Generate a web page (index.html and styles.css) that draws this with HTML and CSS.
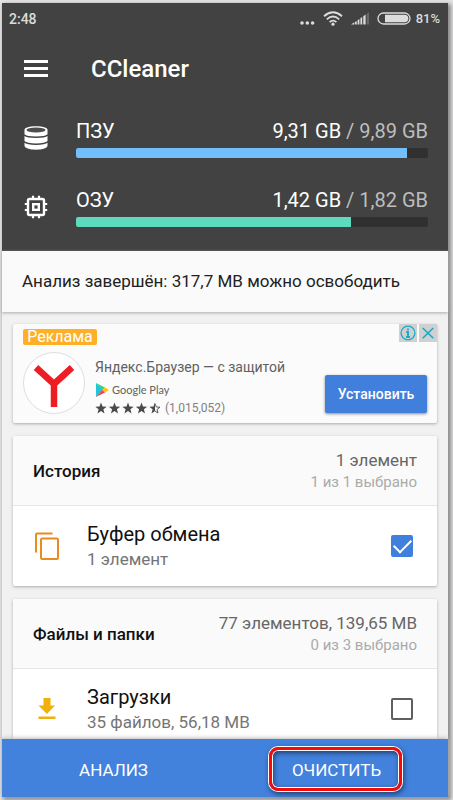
FILE: index.html
```html
<!DOCTYPE html>
<html lang="ru">
<head>
<meta charset="utf-8">
<meta name="viewport" content="width=device-width, initial-scale=1">
<title>CCleaner</title>
<link rel="stylesheet" href="styles.css">
</head>
<body>
<div class="phone">
  <header class="top">
    <div class="status">
      <span class="status-text">2:48</span>
      <div class="status-icons">
        <svg class="dots" viewBox="0 0 15 4" width="15" height="4" fill="currentColor"><circle cx="2" cy="2" r="1.8"/><circle cx="7.3" cy="2" r="1.8"/><circle cx="12.6" cy="2" r="1.8"/></svg>
        <svg class="wifi" viewBox="0 0 20 15" width="20" height="15" fill="none" stroke="currentColor" stroke-width="1.8"><path d="M1 5.2Q10 -2.6 19 5.2M3.8 8.3Q10 2.8 16.2 8.3M6.6 11.2Q10 8 13.4 11.2"/><circle cx="10" cy="13.2" r="1.6" fill="currentColor" stroke="none"/></svg>
        <svg class="signal" viewBox="0 0 18 13" width="18" height="13" fill="currentColor"><path d="M0 12.5L3 10.6V12.5ZM3.7 10.2L5.7 9V12.5H3.7ZM6.6 8.2L8.4 7V12.5H6.6ZM9.4 6.2L11.2 5V12.5H9.4ZM12.3 4.3L14.6 2.6V12.5H12.3Z"/><path opacity=".25" d="M15.6 2L18 .3V12.5H15.6Z"/></svg>
        <svg class="battery" viewBox="0 0 34 13" width="34" height="13"><rect x="1" y="1" width="32" height="11" rx="5.5" fill="none" stroke="currentColor" stroke-width="1.3"/><path d="M8 2.8H27.6A3.7 3.7 0 0 1 27.6 10.2H8Z" fill="currentColor"/></svg>
        <span class="percent">81%</span>
      </div>
    </div>
    <div class="appbar">
      <button class="menu" type="button" aria-label="Меню"><svg viewBox="0 0 24 18" width="24" height="18" fill="currentColor"><path d="M0 0H24V3H0ZM0 7H24V10H0ZM0 14H24V17H0Z"/></svg></button>
      <h1>CCleaner</h1>
    </div>
    <div class="meter">
      <svg class="meter-icon" viewBox="0 0 24 24" width="24" height="24"><path fill="currentColor" d="M.5 3.8C.5 1.8 5.5.3 12 .3s11.500 1.500 11.500 3.500V19.500C23.500 22 18.500 23.700 12 23.700S.5 22 .5 19.500Z"/><ellipse cx="12" cy="4" rx="9.500" ry="2.400" fill="#4d4d4d"/><path d="M0 8.700C3 12 21 12 24 8.700M0 15.500C3 19 21 19 24 15.500" fill="none" stroke="#424242" stroke-width="1.500"/></svg>
      <div class="meter-main">
        <div class="meter-label"><span>ПЗУ</span><span>9,31 GB <span class="total">/ 9,89 GB</span></span></div>
        <div class="track" role="progressbar" aria-label="ПЗУ" aria-valuenow="94"><div class="fill rom" style="width:94%"></div></div>
      </div>
    </div>
    <div class="meter">
      <svg class="meter-icon" viewBox="0 0 24 24" width="24" height="24" fill="none" stroke="currentColor"><rect x="4" y="4" width="16" height="16" rx="1.500" stroke-width="2.400"/><rect x="9.200" y="9.200" width="5.600" height="5.600" stroke-width="2.400"/><path stroke-width="2.200" d="M9 .8V4M15 .8V4M9 20V23.200M15 20V23.200M.8 9H4M.8 15H4M20 9H23.200M20 15H23.200"/></svg>
      <div class="meter-main">
        <div class="meter-label"><span>ОЗУ</span><span>1,42 GB <span class="total">/ 1,82 GB</span></span></div>
        <div class="track" role="progressbar" aria-label="ОЗУ" aria-valuenow="78"><div class="fill ram" style="width:78%"></div></div>
      </div>
    </div>
  </header>
  <p class="summary">Анализ завершён: 317,7 MB можно освободить</p>
  <main class="list">
    <section class="card ad">
      <div class="ad-controls">
        <button type="button" aria-label="О рекламе"><svg viewBox="0 0 18 18" width="18" height="18" fill="none" stroke="currentColor"><circle cx="9" cy="9" r="6.900" stroke-width="1.300"/><path stroke-width="1.900" d="M9 4.500V6.200M7.200 8H9V13M7 13H11"/></svg></button>
        <button type="button" aria-label="Закрыть"><svg viewBox="0 0 18 18" width="18" height="18" fill="none" stroke="currentColor" stroke-width="1.600"><path d="M3.700 4L14.300 14.300M14.300 4L3.700 14.300"/></svg></button>
      </div>
      <span class="ad-tag">Реклама</span>
      <div class="ad-body">
        <svg class="ad-logo" viewBox="0 0 62 62" width="62" height="62"><circle cx="31" cy="31" r="30.500" fill="#fff" stroke="#dedede"/><path d="M13 15.500L31 32L49 15.500M31 31V55" fill="none" stroke="#ee1c23" stroke-width="6.500"/></svg>
        <div class="ad-info">
          <div class="ad-title">Яндекс.Браузер — с защитой</div>
          <div class="store">
            <svg viewBox="0 0 14 14" width="14" height="14"><path fill="#22c4d9" d="M1 0L8 7L1 14Z"/><path fill="#35d07f" d="M1 0L10 4.500L7.500 7Z"/><path fill="#ef4056" d="M1 14L10 9.500L7.500 7Z"/><path fill="#ffc400" d="M10 4.500L14 7L10 9.500L7.500 7Z"/></svg>
            <span>Google Play</span>
          </div>
          <div class="rating">
            <svg viewBox="0 0 66 12" width="66" height="12" fill="#4a4a4a"><defs><path id="star" d="M6 .5L7.500 4.500L11.700 4.700L8.400 7.300L9.500 11.500L6 9.100L2.500 11.500L3.600 7.300L.3 4.700L4.500 4.500Z"/></defs><use href="#star"/><use href="#star" x="13.500"/><use href="#star" x="27"/><use href="#star" x="40.500"/><path d="M60 .5V9.100L56.500 11.500L57.600 7.300L54.300 4.700L58.500 4.500Z"/><path d="M60 1.500L61.300 5L65 5.200L62 7.500L63 11L60 9" fill="none" stroke="#4a4a4a" stroke-width=".9"/></svg>
            <span>(1,015,052)</span>
          </div>
        </div>
        <button class="install" type="button">Установить</button>
      </div>
    </section>
    <section class="card">
      <div class="card-head">
        <h2>История</h2>
        <div class="counts"><div class="count">1 элемент</div><div class="selected">1 из 1 выбрано</div></div>
      </div>
      <label class="item">
        <svg class="item-icon" viewBox="0 0 28 28" width="28" height="28" fill="none" stroke="#e98a23" stroke-width="2"><path d="M3 20.500V2.500Q3 1.500 4 1.500H19.500"/><rect x="8" y="6.500" width="17" height="20.500" rx="1.200"/></svg>
        <span class="item-text"><span class="name">Буфер обмена</span><span class="detail">1 элемент</span></span>
        <input type="checkbox" checked>
      </label>
    </section>
    <section class="card">
      <div class="card-head">
        <h2>Файлы и папки</h2>
        <div class="counts"><div class="count">77 элементов, 139,65 MB</div><div class="selected">0 из 3 выбрано</div></div>
      </div>
      <label class="item">
        <svg class="item-icon" viewBox="0 0 28 28" width="28" height="28" fill="#f2b10a"><path d="M10.500 3H17.500V10.500H22L14 19L5.500 10.500H10.500ZM5.500 21.500H22.500V24H5.500Z"/></svg>
        <span class="item-text"><span class="name">Загрузки</span><span class="detail">35 файлов, 56,18 MB</span></span>
        <input type="checkbox">
      </label>
    </section>
  </main>
  <footer class="actions">
    <button type="button">АНАЛИЗ</button>
    <button type="button" class="marked">ОЧИСТИТЬ</button>
  </footer>
</div>
</body>
</html>
```
FILE: styles.css
```css
* { box-sizing: border-box; }
body {
  margin: 0;
  height: 100vh;
  padding: 3px 5px 3px 2px;
  background: #e4e4e4;
  font-family: Roboto, "Liberation Sans", sans-serif;
}
h1, h2, p { margin: 0; }
button {
  margin: 0;
  padding: 0;
  border: 0;
  background: none;
  color: inherit;
  font: inherit;
  cursor: pointer;
}
svg { display: block; flex: none; }
.phone {
  display: flex;
  flex-direction: column;
  height: 100%;
  background: #f1f1f1;
  box-shadow: 2px 2px 4px 1px #888;
}
.top {
  flex: none;
  padding-bottom: 23px;
  background: #424242;
  color: #fff;
}
.status {
  display: flex;
  justify-content: space-between;
  padding: 8px 8px 0 7px;
  height: 32px;
  color: #dcdcdc;
  font-size: 14px;
  font-weight: 500;
  line-height: 16px;
}
.status-icons { display: flex; align-items: flex-start; }
.dots { margin: 10px 8px 0 0; }
.wifi { margin-right: 8px; }
.signal { margin: 1px 8px 0 0; }
.battery { margin: 1px 5px 0 0; }
.percent { font-size: 13px; }
.appbar {
  display: flex;
  align-items: center;
  gap: 43px;
  height: 64px;
  padding: 4px 22px 0;
}
.menu { flex: none; width: 24px; }
h1 { font-size: 24px; font-weight: 500; line-height: 32px; }
.meter {
  display: flex;
  gap: 28px;
  height: 60px;
  padding: 20px 20px 0 22px;
}
.meter + .meter { height: 69px; padding-top: 29px; }
.meter-icon { margin-top: 7px; }
.meter-main { flex: 1; }
.meter-label {
  display: flex;
  justify-content: space-between;
  font-size: 20px;
  line-height: 24px;
}
.total { color: #bdbdbd; }
.track {
  height: 10px;
  margin-top: 5px;
  border-radius: 2px;
  background: #303030;
  overflow: hidden;
}
.fill { height: 100%; }
.rom { background: #72bffc; }
.ram { background: #5edbbd; }
.summary {
  position: relative;
  flex: none;
  padding: 20px;
  background: #fafafa;
  color: #212121;
  font-size: 17px;
  line-height: 21px;
  white-space: nowrap;
  box-shadow: 0 1px 3px #aaa;
}
.list {
  display: flex;
  flex-direction: column;
  flex: 1;
  gap: 13px;
  min-height: 0;
  padding: 12px 11px 0;
  overflow: hidden;
}
.card {
  flex: none;
  border-radius: 2px;
  background: #fff;
  box-shadow: 0 1px 3px #aaa;
}
.ad {
  position: relative;
  height: 99px;
  padding: 5px 10px;
  background: #fbfbfb;
}
.ad-controls {
  position: absolute;
  top: 0;
  right: 0;
  display: flex;
  gap: 2px;
  color: #13adcb;
}
.ad-controls button { background: #d0d0d0; }
.ad-tag {
  display: block;
  width: 74px;
  border-radius: 2px;
  background: #ffb026;
  color: #fff;
  font-size: 16px;
  line-height: 16px;
  text-align: center;
}
.ad-body { display: flex; align-items: flex-start; padding-top: 7px; }
.ad-info { flex: 1; min-width: 0; margin-left: 10px; padding-top: 5px; color: #616161; }
.ad-title { font-size: 14px; line-height: 20px; white-space: nowrap; }
.store {
  display: flex;
  align-items: center;
  gap: 3px;
  margin-top: 4px;
  font: 11px/18px Lato, sans-serif;
}
.rating {
  display: flex;
  align-items: center;
  gap: 4px;
  color: #808080;
  font-size: 12px;
  line-height: 18px;
}
.install {
  flex: none;
  width: 102px;
  height: 38px;
  margin-top: 23px;
  border-radius: 2px;
  background: #4080dc;
  color: #fff;
  font-size: 14px;
  font-weight: 500;
  line-height: 20px;
  box-shadow: 0 1px 3px #888;
}
.card-head {
  display: flex;
  align-items: center;
  justify-content: space-between;
  height: 70px;
  padding: 0 20px;
  border-bottom: 1px solid #e6e6e6;
  border-radius: 2px 2px 0 0;
  background: #fafafa;
}
h2 { color: #111; font-size: 17px; font-weight: 500; line-height: 24px; }
.counts { text-align: right; }
.count { color: #666; font-size: 17px; line-height: 22px; }
.selected { color: #aaa; font-size: 15px; line-height: 22px; }
.item {
  display: flex;
  align-items: center;
  height: 80px;
  padding: 0 24px 0 20px;
}
.item-text { flex: 1; margin-left: 26px; }
.name, .detail { display: block; }
.name { color: #111; font-size: 20px; line-height: 26px; }
.detail { color: #757575; font-size: 17px; line-height: 24px; }
input {
  appearance: none;
  width: 22px;
  height: 22px;
  margin: 0;
  border: 2px solid #5f5f5f;
  border-radius: 2px;
}
input:checked {
  display: grid;
  place-items: center;
  border-color: #4080dc;
  background: #4080dc;
}
input:checked::before {
  content: "";
  width: 15px;
  height: 8px;
  border: solid #fff;
  border-width: 0 0 2px 2px;
  transform: translateY(-2px) rotate(-45deg);
}
.actions {
  position: relative;
  display: flex;
  flex: none;
  height: 58px;
  background: #4282dd;
  color: #fff;
  font-size: 17px;
  box-shadow: 0 -1px 4px #bbb;
}
.actions button { flex: 1; padding-top: 3px; }
.marked { position: relative; }
.marked::after {
  content: "";
  position: absolute;
  top: 8px;
  right: 46px;
  bottom: 6px;
  left: 44px;
  border: 3px solid #f50a0a;
  border-radius: 9px;
  box-shadow: 0 0 0 1px #fff, inset 0 0 0 1px #fff, 1px 2px 5px 1px #223c66, inset 1px 2px 5px 1px #223c66;
}
```
